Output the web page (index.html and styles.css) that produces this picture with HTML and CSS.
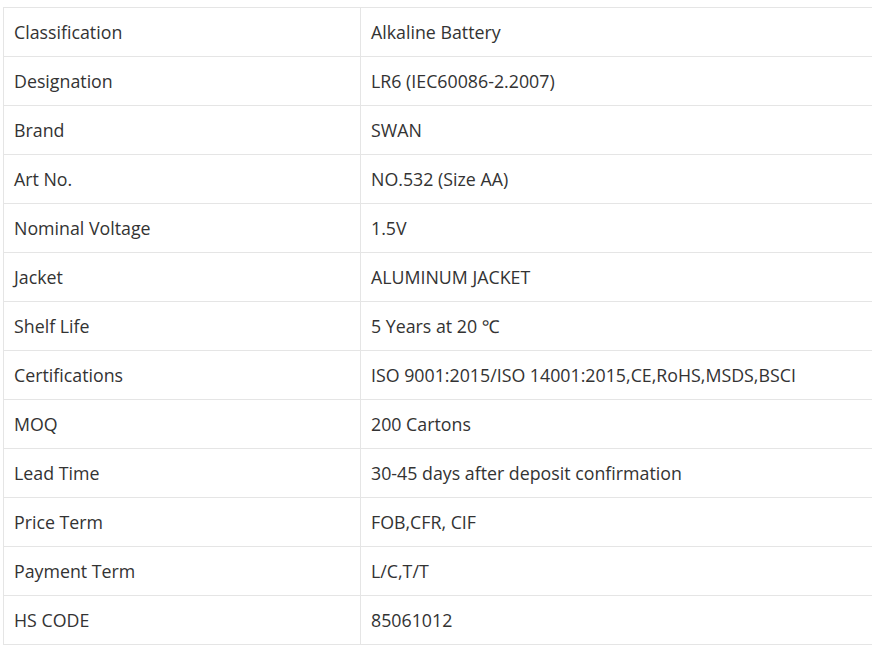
FILE: index.html
```html
<!DOCTYPE html>
<html>
<head>
<meta charset="utf-8">
<link rel="stylesheet" href="styles.css">
</head>
<body>
<div class="wrap">
<table class="spec">
<colgroup><col class="c1"><col class="c2"></colgroup>
<tbody>
<tr><td>Classification</td><td>Alkaline Battery</td></tr>
<tr><td>Designation</td><td>LR6 (IEC60086-2.2007)</td></tr>
<tr><td>Brand</td><td>SWAN</td></tr>
<tr><td>Art No.</td><td>NO.532 (Size AA)</td></tr>
<tr><td>Nominal Voltage</td><td>1.5V</td></tr>
<tr><td>Jacket</td><td>ALUMINUM JACKET</td></tr>
<tr><td>Shelf Life</td><td>5 Years at 20 ℃</td></tr>
<tr><td>Certifications</td><td>ISO 9001:2015/ISO 14001:2015,CE,RoHS,MSDS,BSCI</td></tr>
<tr><td>MOQ</td><td>200 Cartons</td></tr>
<tr><td>Lead Time</td><td>30-45 days after deposit confirmation</td></tr>
<tr><td>Price Term</td><td>FOB,CFR, CIF</td></tr>
<tr><td>Payment Term</td><td>L/C,T/T</td></tr>
<tr><td>HS CODE</td><td>85061012</td></tr>
</tbody>
</table>
</div>
</body>
</html>
```
FILE: styles.css
```css
html, body {
  margin: 0;
  padding: 0;
  background: #fff;
  overflow: hidden;
}
.wrap {
  padding: 7px 0 0 3px;
  width: 900px;
}
.spec {
  border-collapse: collapse;
  width: 890px;
  table-layout: fixed;
  font-family: "Open Sans", "Noto Sans", sans-serif;
  font-size: 17.8px;
  color: #333;
}
.c1 { width: 357px; }
.spec td {
  border: 1px solid #e5e5e5;
  height: 49px;
  padding: 0 10px;
  box-sizing: border-box;
  vertical-align: middle;
  line-height: 24px;
}
```
